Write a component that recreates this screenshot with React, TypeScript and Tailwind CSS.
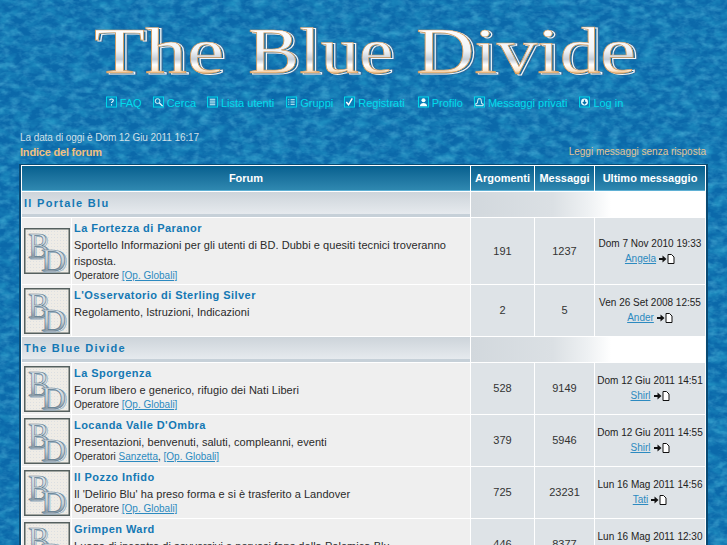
import React from 'react';

type Mod = { prefix: string; names: string[] };
type Forum = {
  title: string;
  desc: string[];
  mod?: Mod;
  topics: number;
  posts: number;
  date: string;
  user: string;
  h: string;
};

const portale: Forum[] = [
  {
    title: 'La Fortezza di Paranor',
    desc: ['Sportello Informazioni per gli utenti di BD. Dubbi e quesiti tecnici troveranno', 'risposta.'],
    mod: { prefix: 'Operatore', names: ['[Op. Globali]'] },
    topics: 191,
    posts: 1237,
    date: 'Dom 7 Nov 2010 19:33',
    user: 'Angela',
    h: 'h-[66px]',
  },
  {
    title: "L'Osservatorio di Sterling Silver",
    desc: ['Regolamento, Istruzioni, Indicazioni'],
    topics: 2,
    posts: 5,
    date: 'Ven 26 Set 2008 12:55',
    user: 'Ander',
    h: 'h-[51px]',
  },
];

const divide: Forum[] = [
  {
    title: 'La Sporgenza',
    desc: ['Forum libero e generico, rifugio dei Nati Liberi'],
    mod: { prefix: 'Operatore', names: ['[Op. Globali]'] },
    topics: 528,
    posts: 9149,
    date: 'Dom 12 Giu 2011 14:51',
    user: 'Shirl',
    h: 'h-[51px]',
  },
  {
    title: "Locanda Valle D'Ombra",
    desc: ['Presentazioni, benvenuti, saluti, compleanni, eventi'],
    mod: { prefix: 'Operatori', names: ['Sanzetta', '[Op. Globali]'] },
    topics: 379,
    posts: 5946,
    date: 'Dom 12 Giu 2011 14:55',
    user: 'Shirl',
    h: 'h-[51px]',
  },
  {
    title: 'Il Pozzo Infido',
    desc: ["Il 'Delirio Blu' ha preso forma e si è trasferito a Landover"],
    mod: { prefix: 'Operatore', names: ['[Op. Globali]'] },
    topics: 725,
    posts: 23231,
    date: 'Lun 16 Mag 2011 14:56',
    user: 'Tati',
    h: 'h-[51px]',
  },
  {
    title: 'Grimpen Ward',
    desc: ['Luogo di incontro di sovversivi e nervosi fans della Polemica Blu'],
    topics: 446,
    posts: 8377,
    date: 'Lun 16 Mag 2011 12:30',
    user: 'Tati',
    h: 'h-[51px]',
  },
];

const Texture = () => (
  <svg className="absolute inset-0 h-full w-full" aria-hidden="true">
    <filter id="water" x="0" y="0" width="100%" height="100%">
      <feTurbulence type="fractalNoise" baseFrequency="0.07 0.11" numOctaves="3" seed="7" />
      <feColorMatrix type="matrix" values="0 0 0 0 0.02  0 0 0 0 0.33  0 0 0 0 0.58  1.6 0 0 0 -0.62" />
    </filter>
    <filter id="light" x="0" y="0" width="100%" height="100%">
      <feTurbulence type="fractalNoise" baseFrequency="0.1 0.16" numOctaves="3" seed="21" />
      <feColorMatrix type="matrix" values="0 0 0 0 0.1  0 0 0 0 0.5  0 0 0 0 0.74  0 1.1 0 0 -0.48" />
    </filter>
    <rect width="100%" height="100%" fill="#0b69aa" />
    <rect width="100%" height="100%" filter="url(#water)" />
    <rect width="100%" height="100%" filter="url(#light)" />
  </svg>
);

// shared text and paint for the logo and the forum markers, drawn once and reused
const SharedDefs = () => (
  <svg className="absolute h-0 w-0" aria-hidden="true">
    <defs>
      <linearGradient id="metal" gradientUnits="userSpaceOnUse" x1="0" y1="28" x2="0" y2="74">
        <stop offset="0" stopColor="#ffffff" />
        <stop offset="0.5" stopColor="#f0f3f7" />
        <stop offset="0.68" stopColor="#c6ced8" />
        <stop offset="0.8" stopColor="#ffffff" />
        <stop offset="0.93" stopColor="#fbe6cc" />
        <stop offset="1" stopColor="#e09a4c" />
      </linearGradient>
      <linearGradient id="bdmetal" x1="0" y1="0" x2="0" y2="1">
        <stop offset="0" stopColor="#eef3f6" />
        <stop offset="0.55" stopColor="#c4d0d8" />
        <stop offset="0.75" stopColor="#8d9ba6" />
        <stop offset="1" stopColor="#f4f6f8" />
      </linearGradient>
      <pattern id="dots" width="3" height="3" patternUnits="userSpaceOnUse">
        <rect width="3" height="3" fill="#efece6" />
        <rect width="1" height="1" fill="#dcdfe2" />
      </pattern>
      <g id="title" fontFamily="'Liberation Serif', serif" fontSize="65">
        <text x="94" y="73" textLength="130" lengthAdjust="spacingAndGlyphs">
          The
        </text>
        <text x="248" y="73" textLength="145" lengthAdjust="spacingAndGlyphs">
          Blue
        </text>
        <text x="416" y="73" textLength="220" lengthAdjust="spacingAndGlyphs">
          Divide
        </text>
      </g>
      <g id="bd" fontFamily="'Liberation Serif', serif">
        <text x="4" y="30" fontSize="36" textLength="21" lengthAdjust="spacingAndGlyphs">
          B
        </text>
        <text x="17" y="43" fontSize="32" textLength="25" lengthAdjust="spacingAndGlyphs">
          D
        </text>
      </g>
    </defs>
  </svg>
);

const Logo = () => (
  <svg width="727" height="96" className="block" role="img" aria-label="The Blue Divide">
    <use href="#title" x="3.500" y="1" fill="#2f6f9f" stroke="#2f6f9f" strokeWidth="2" />
    <use href="#title" x="2.500" y="0.500" fill="#16689f" stroke="#f2f5f7" strokeWidth="1" />
    <use href="#title" fill="url(#metal)" stroke="#d79c5c" strokeWidth="0.700" />
  </svg>
);

const BoxIcon = ({ children }: { children: React.ReactNode }) => (
  <svg width="11" height="12" viewBox="0 0 12 12" className="mb-[2px] shrink-0" aria-hidden="true">
    <rect x="0.5" y="0.5" width="11" height="11" fill="#0a7fb8" stroke="#00dcec" />
    {children}
  </svg>
);

const navItems: { label: string; icon: React.ReactNode; gap: string }[] = [
  {
    label: 'FAQ',
    gap: 'ml-0',
    icon: (
      <path d="M4 4.200c0-2 4-2 4 0 0 1.500-2 1.500-2 3M6 8.500v1.200" fill="none" stroke="#e8fbff" strokeWidth="1.200" />
    ),
  },
  {
    label: 'Cerca',
    gap: 'ml-[11px]',
    icon: (
      <g fill="none" stroke="#eaffff">
        <circle cx="5" cy="5" r="2.600" />
        <path d="M7 7l3.500 3.500" strokeWidth="1.500" />
      </g>
    ),
  },
  {
    label: 'Lista utenti',
    gap: 'ml-[11px]',
    icon: <path d="M3 3h6M3 5h6M3 7h6M3 9h6" stroke="#eaffff" />,
  },
  {
    label: 'Gruppi',
    gap: 'ml-[12px]',
    icon: <path d="M2.500 3.500h1M5 3.500h4.500M2.500 6h1M5 6h4.500M2.500 8.500h1M5 8.500h4.500" stroke="#eaffff" />,
  },
  {
    label: 'Registrati',
    gap: 'ml-[11px]',
    icon: <path d="M2.500 6l2.500 3 4-7" fill="none" stroke="#fff" strokeWidth="1.600" />,
  },
  {
    label: 'Profilo',
    gap: 'ml-[13px]',
    icon: (
      <g fill="#f4ffff">
        <circle cx="6" cy="4.200" r="2.200" />
        <path d="M2 10.500c.3-2.600 2-3.500 4-3.500s3.700.9 4 3.500z" />
      </g>
    ),
  },
  {
    label: 'Messaggi privati',
    gap: 'ml-[11px]',
    icon: <path d="M4.500 2.500h3l1 5.500h1.500v2H2V7.500h1.500z" fill="none" stroke="#eaffff" />,
  },
  {
    label: 'Log in',
    gap: 'ml-[12px]',
    icon: (
      <g>
        <circle cx="6" cy="6" r="3.800" fill="#e8fbff" />
        <path d="M6 3.500v4M4.200 6l1.800 2 1.800-2" fill="none" stroke="#0a6fa8" strokeWidth="1.300" />
      </g>
    ),
  },
];

const Nav = () => (
  <nav className="flex justify-center pl-[2px] text-[11px] leading-[14px] text-[#00dcec]">
    {navItems.map((item) => (
      <span key={item.label} className={`flex items-end gap-[3px] whitespace-nowrap ${item.gap}`}>
        <BoxIcon>{item.icon}</BoxIcon>
        {item.label}
      </span>
    ))}
  </nav>
);

// the small "BD" forum marker
const FolderIcon = () => (
  <svg width="46" height="46" viewBox="0 0 46 46" className="block" role="img" aria-label="BD">
    <rect x="0.750" y="0.750" width="44.500" height="44.500" fill="url(#dots)" stroke="#55605f" strokeWidth="1.500" />
    <use href="#bd" x="1.500" y="0.500" fill="none" stroke="#8fabbf" strokeWidth="0.800" />
    <use href="#bd" fill="url(#bdmetal)" stroke="#5f7c90" strokeWidth="0.700" />
  </svg>
);

const ForumRow = ({ f }: { f: Forum }) => (
  <tr className={f.h}>
    <td className="bg-[#efefef] p-0 align-middle">
      <div className="flex justify-center">
        <FolderIcon />
      </div>
    </td>
    <td className="bg-[#efefef] px-[2px] pt-[2px] align-top">
      <div className="text-[11px] leading-[16px] font-bold tracking-[0.45px] text-[#1478b4]">{f.title}</div>
      <div className="mt-[1px] text-[11px] leading-[16px] tracking-[0.05px] text-[#2a2a2a]">
        {f.desc.map((line) => (
          <div key={line} className="whitespace-nowrap">
            {line}
          </div>
        ))}
      </div>
      {f.mod && (
        <div className="text-[10px] leading-[14px] text-[#2a2a2a]">
          {f.mod.prefix}{' '}
          {f.mod.names.map((n, i) => (
            <React.Fragment key={n}>
              {i > 0 && ', '}
              <a className="text-[#2c8ac0] underline">{n}</a>
            </React.Fragment>
          ))}
        </div>
      )}
    </td>
    <td className="bg-[#dee3e7] text-center text-[11px] text-[#333]">{f.topics}</td>
    <td className="bg-[#dee3e7] text-center text-[11px] text-[#333]">{f.posts}</td>
    <td className="bg-[#dee3e7] text-center text-[10px] leading-[14px] whitespace-nowrap text-[#222]">
      <div>{f.date}</div>
      <div className="mt-[1px] flex items-center justify-center gap-[3px]">
        <a className="text-[#2c8ac0] underline">{f.user}</a>
        <svg width="16" height="10" viewBox="0 0 16 10" aria-hidden="true">
          <path d="M0 4h3.500V1.500L7.500 5l-4 3.500V6H0z" fill="#111" />
          <path d="M9 .5h3.500L15 3v6.500H9z" fill="#fff" stroke="#111" />
        </svg>
      </div>
    </td>
  </tr>
);

const CatRow = ({ title }: { title: string }) => (
  <tr className="h-[25px]">
    <td
      colSpan={2}
      className="border-b-[3px] border-[#c6d0d8] bg-gradient-to-b from-[#cdd4da] to-[#e6eaee] px-[2px] text-[11px] font-bold tracking-[1.3px] text-[#1478b4]"
    >
      {title}
    </td>
    <td
      colSpan={3}
      className="border-b-[3px] border-b-transparent bg-[linear-gradient(to_right,#d2d8dd_0%,#dbe0e4_35%,#eef1f3_50%,#ffffff_60%)]"
    />
  </tr>
);

const HeadCell = ({ children, span }: { children: React.ReactNode; span?: number }) => (
  <th
    colSpan={span}
    className="border-b border-[#5fb0d4] bg-gradient-to-b from-[#05608f] to-[#2f88b0] p-0 text-center text-[11px] font-bold whitespace-nowrap text-white"
  >
    {children}
  </th>
);

export default function App() {
  return (
    <div className="relative h-screen overflow-hidden font-['Liberation_Sans',Arial,sans-serif]">
      <Texture />
      <SharedDefs />
      <div className="relative">
        <Logo />
        <Nav />
        <div className="mt-[21px] flex items-end justify-between px-[20px]">
          <div>
            <div className="text-[10px] leading-[14px] tracking-[-0.08px] text-[#cfe0e8]">
              La data di oggi è Dom 12 Giu 2011 16:17
            </div>
            <div className="text-[11px] leading-[14px] font-bold tracking-[-0.2px] text-[#f0c080]">
              Indice del forum
            </div>
          </div>
          <div className="pr-[1px] text-[10px] leading-[14px] text-[#e2c596]">Leggi messaggi senza risposta</div>
        </div>
        <div className="mt-[5px] ml-[19px] w-[689px] border-x-2 border-t border-b-2 border-[#0a4a72] bg-white">
          <table className="w-full table-fixed border-separate border-spacing-[1px] bg-white">
            <colgroup>
              <col className="w-[49px]" />
              <col />
              <col className="w-[63px]" />
              <col className="w-[59px]" />
              <col className="w-[110px]" />
            </colgroup>
            <thead>
              <tr className="h-[25px]">
                <HeadCell span={2}>Forum</HeadCell>
                <HeadCell>Argomenti</HeadCell>
                <HeadCell>Messaggi</HeadCell>
                <HeadCell>Ultimo messaggio</HeadCell>
              </tr>
            </thead>
            <tbody>
              <CatRow title="Il Portale Blu" />
              {portale.map((f) => (
                <ForumRow key={f.title} f={f} />
              ))}
              <CatRow title="The Blue Divide" />
              {divide.map((f) => (
                <ForumRow key={f.title} f={f} />
              ))}
            </tbody>
          </table>
        </div>
      </div>
    </div>
  );
}
